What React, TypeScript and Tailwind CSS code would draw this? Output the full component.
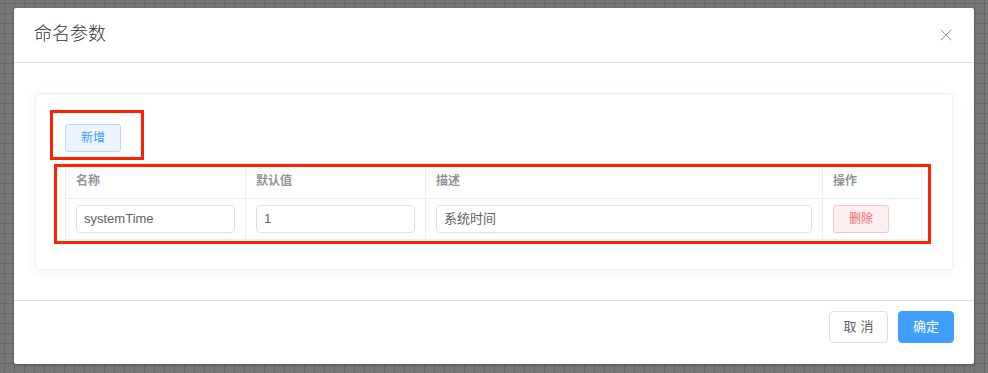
import { X } from "lucide-react";

const font = "font-['Liberation_Sans','Noto_Sans_CJK_SC',sans-serif]";

interface Param {
    name: string;
    value: string;
    desc: string;
}

const params: Param[] = [{ name: "systemTime", value: "1", desc: "系统时间" }];

export default function App() {
    return (
        <div
            className={`${font} relative w-[988px] h-[373px] overflow-hidden bg-[#777777] bg-[linear-gradient(#686868_1px,transparent_1px),linear-gradient(90deg,#686868_1px,transparent_1px)] bg-size-[10px_10px] bg-position-[4px_3px] pt-[8px] pl-[14px]`}
        >
            {/* Dialog */}
            <div className="w-[960px] h-[356px] bg-white rounded-[2px] shadow-[0_1px_3px_rgba(0,0,0,0.3)] flex flex-col">
                <div className="h-[55px] flex items-center justify-between pl-[20px] pr-[18px] border-b border-[#dcdfe6]">
                    <h1 className="text-[18px] leading-none font-light text-[#303133] pb-[2px]">命名参数</h1>
                    <X className="w-[20px] h-[20px] text-[#909399] mb-[1px]" strokeWidth={1.2} />
                </div>

                <div className="h-[238px] px-[21px] pt-[30px] border-b border-[#dcdfe6]">
                    {/* Card */}
                    <div className="h-[177px] border border-[#ebeef5] rounded-[4px] shadow-[0_2px_12px_0_rgba(60,80,200,0.07)] pl-[29px] pr-[30px] pt-[30px]">
                        <button className="w-[56px] h-[28px] text-[12px] text-[#409eff] bg-[#ecf5ff] border border-[#b3d8ff] rounded-[3px]">
                            新增
                        </button>
                        <div className="mt-[11px] border border-[#ebeef5] border-b-0">
                            <div className="flex h-[35px] border-b border-[#ebeef5] text-[12px] font-bold text-[#909399]">
                                <div className="w-[180px] px-[10px] flex items-center border-r border-[#ebeef5]">名称</div>
                                <div className="w-[180px] px-[10px] flex items-center border-r border-[#ebeef5]">默认值</div>
                                <div className="w-[397px] px-[10px] flex items-center border-r border-[#ebeef5]">描述</div>
                                <div className="flex-1 px-[10px] flex items-center">操作</div>
                            </div>
                            {params.map((p) => (
                                <div key={p.name} className="flex h-[41px] border-b border-[#ebeef5] text-[13px] text-[#606266]">
                                    <div className="w-[180px] px-[10px] flex items-center border-r border-[#ebeef5]">
                                        <div className="w-full h-[28px] border border-[#dcdfe6] rounded-[4px] px-[7px] flex items-center">{p.name}</div>
                                    </div>
                                    <div className="w-[180px] px-[10px] flex items-center border-r border-[#ebeef5]">
                                        <div className="w-full h-[28px] border border-[#dcdfe6] rounded-[4px] px-[7px] flex items-center">{p.value}</div>
                                    </div>
                                    <div className="w-[397px] px-[10px] flex items-center border-r border-[#ebeef5]">
                                        <div className="w-full h-[28px] border border-[#dcdfe6] rounded-[4px] px-[7px] flex items-center">{p.desc}</div>
                                    </div>
                                    <div className="flex-1 px-[10px] flex items-center">
                                        <button className="w-[56px] h-[28px] text-[12px] text-[#f56c6c] bg-[#fef0f0] border border-[#fbc4c4] rounded-[3px]">
                                            删除
                                        </button>
                                    </div>
                                </div>
                            ))}
                        </div>
                    </div>
                </div>

                <div className="flex-1 flex items-start justify-end gap-[10px] pr-[20px] pt-[10px]">
                    <button className="w-[59px] h-[32px] text-[13px] text-[#606266] bg-white border border-[#dcdfe6] rounded-[4px] tracking-[4px] pl-[4px]">
                        取消
                    </button>
                    <button className="w-[56px] h-[32px] text-[13px] text-white bg-[#409eff] border border-[#409eff] rounded-[4px]">
                        确定
                    </button>
                </div>
            </div>

            {/* Annotation boxes */}
            <div className="absolute left-[50px] top-[110px] w-[94px] h-[50px] border-[3px] border-[#ff2200]" />
            <div className="absolute left-[54px] top-[164px] w-[877px] h-[80px] border-[3px] border-[#ff2200]" />
        </div>
    );
}
